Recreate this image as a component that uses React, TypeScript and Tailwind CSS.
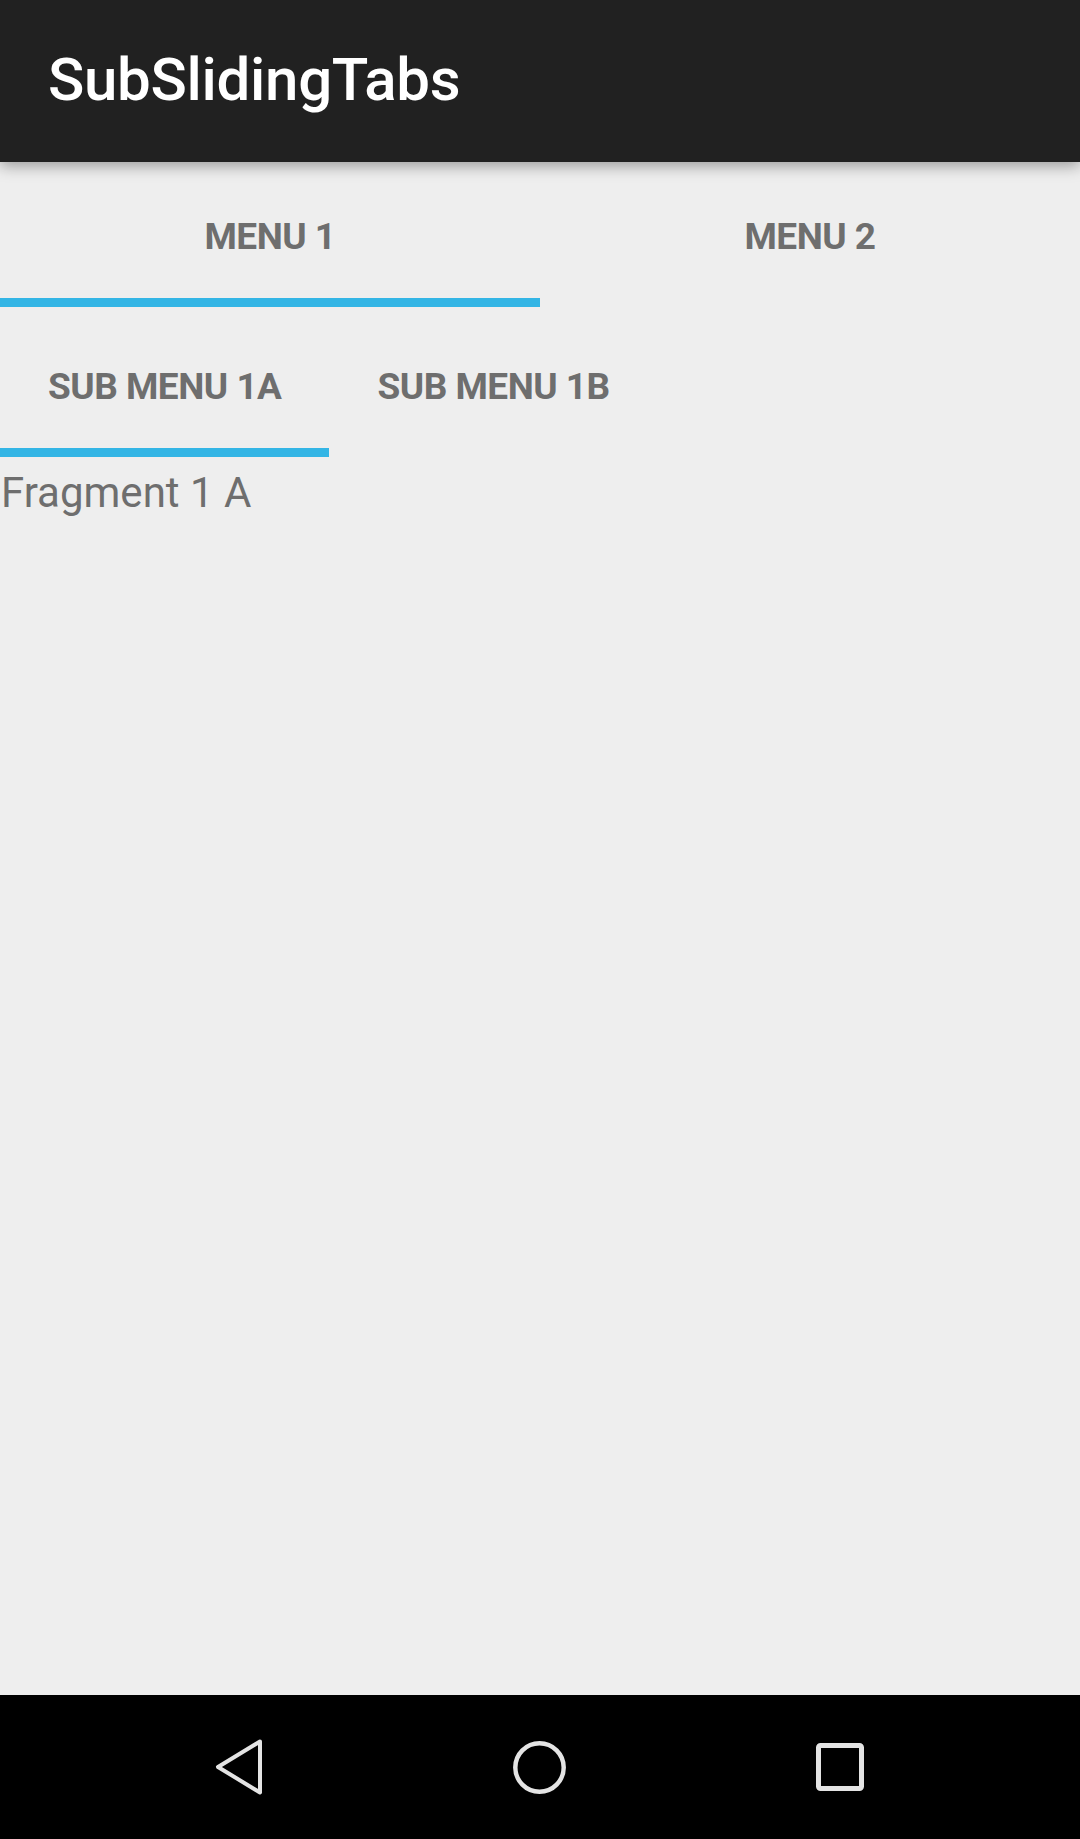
import React from "react";

const font = { fontFamily: "Roboto, 'Noto Sans', sans-serif" };

function NavBar() {
  return (
    <div className="h-[144px] shrink-0 bg-black flex items-center justify-center gap-[250px] pr-[2px]">
      <svg width="48" height="56" viewBox="0 0 48 56">
        <path
          d="M45 2.5 L3 28 L45 53.5 Z"
          fill="none"
          stroke="#e4e4e4"
          strokeWidth="4"
          strokeLinejoin="round"
        />
      </svg>
      <svg width="53" height="53" viewBox="0 0 53 53">
        <circle cx="26.5" cy="26.5" r="24.2" fill="none" stroke="#e4e4e4" strokeWidth="4.5" />
      </svg>
      <svg width="48" height="48" viewBox="0 0 48 48">
        <rect x="2.5" y="2.5" width="43" height="43" rx="2" fill="none" stroke="#e4e4e4" strokeWidth="5" />
      </svg>
    </div>
  );
}

export default function App() {
  return (
    <div className="w-[1080px] h-[1839px] flex flex-col bg-[#eeeeee]" style={font}>
      <div className="relative z-10 h-[162px] shrink-0 bg-[#212121] flex items-center pl-[48px] shadow-[0_4px_14px_rgba(0,0,0,0.35)]">
        <span className="text-white text-[60px] font-medium leading-none pb-[2px] tracking-[-0.3px]">SubSlidingTabs</span>
      </div>

      <div className="grid grid-cols-2 h-[145px] shrink-0">
        <div className="flex flex-col">
          <div className="flex-1 flex justify-center pt-[56px]">
            <span className="text-[37px] font-bold leading-none tracking-[-0.5px] text-[#6e6e6e]">MENU 1</span>
          </div>
          <div className="h-[9px] bg-[#33b5e5]" />
        </div>
        <div className="flex flex-col">
          <div className="flex-1 flex justify-center pt-[56px]">
            <span className="text-[37px] font-bold leading-none tracking-[-0.5px] text-[#6e6e6e]">MENU 2</span>
          </div>
          <div className="h-[9px]" />
        </div>
      </div>

      <div className="flex h-[150px] shrink-0">
        <div className="flex flex-col">
          <div className="flex-1 px-[48px] pt-[61px]">
            <span className="text-[37px] font-bold leading-none tracking-[-0.5px] text-[#6e6e6e]">SUB MENU 1A</span>
          </div>
          <div className="h-[9px] bg-[#33b5e5]" />
        </div>
        <div className="flex flex-col">
          <div className="flex-1 px-[48px] pt-[61px]">
            <span className="text-[37px] font-bold leading-none tracking-[-0.5px] text-[#6e6e6e]">SUB MENU 1B</span>
          </div>
          <div className="h-[9px]" />
        </div>
      </div>

      <div className="flex-1 pt-[15px] pl-[1px]">
        <p className="text-[42px] leading-none text-[#6e6e6e]">Fragment 1 A</p>
      </div>

      <NavBar />
    </div>
  );
}
